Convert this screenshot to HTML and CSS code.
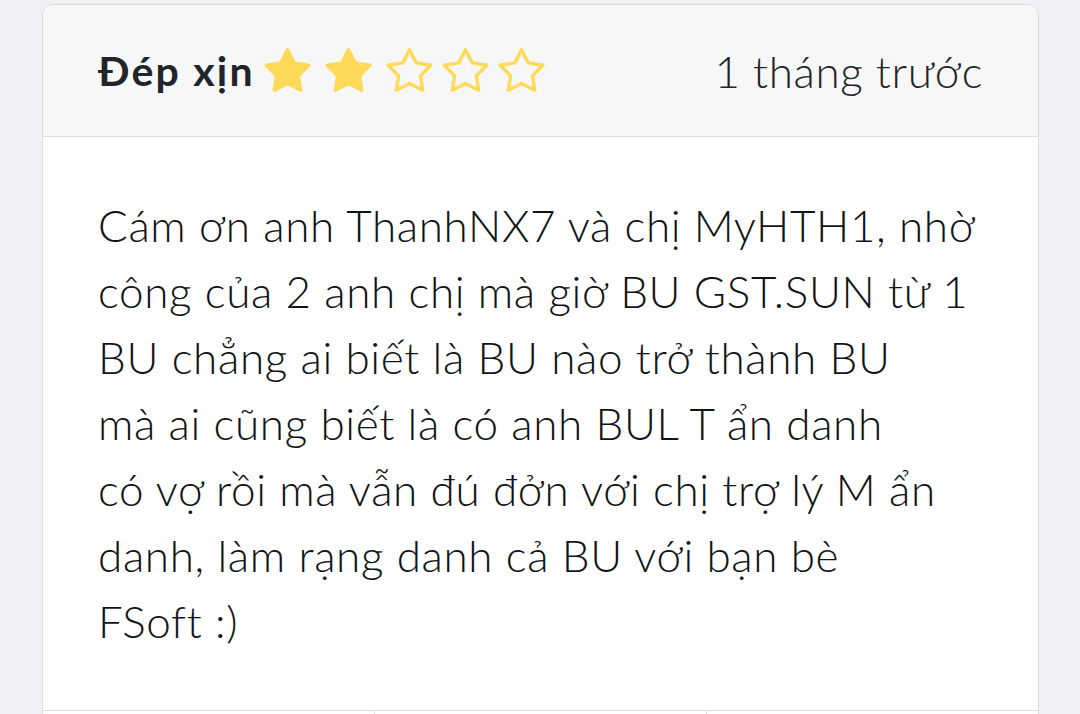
FILE: index.html
```html
<!DOCTYPE html>
<html lang="vi">
<head>
    <meta charset="UTF-8">
    <meta name="viewport" content="width=device-width, initial-scale=1.0">
    <title>Đánh giá</title>
    <link rel="stylesheet" href="styles.css">
</head>
<body>
    <div class="page">
        <div class="card">
            <div class="card-header">
                <div class="title-wrap">
                    <h5 class="title">Đép xịn</h5>
                    <div class="stars">
                        <svg class="star filled" viewBox="0 0 24 24"><polygon points="12 1.8 15.29 8.27 22.46 9.4 17.33 14.53 18.47 21.7 12 18.4 5.53 21.7 6.67 14.53 1.54 9.4 8.71 8.27"/></svg>
                        <svg class="star filled" viewBox="0 0 24 24"><polygon points="12 1.8 15.29 8.27 22.46 9.4 17.33 14.53 18.47 21.7 12 18.4 5.53 21.7 6.67 14.53 1.54 9.4 8.71 8.27"/></svg>
                        <svg class="star" viewBox="0 0 24 24"><polygon points="12 1.8 15.29 8.27 22.46 9.4 17.33 14.53 18.47 21.7 12 18.4 5.53 21.7 6.67 14.53 1.54 9.4 8.71 8.27"/></svg>
                        <svg class="star" viewBox="0 0 24 24"><polygon points="12 1.8 15.29 8.27 22.46 9.4 17.33 14.53 18.47 21.7 12 18.4 5.53 21.7 6.67 14.53 1.54 9.4 8.71 8.27"/></svg>
                        <svg class="star" viewBox="0 0 24 24"><polygon points="12 1.8 15.29 8.27 22.46 9.4 17.33 14.53 18.47 21.7 12 18.4 5.53 21.7 6.67 14.53 1.54 9.4 8.71 8.27"/></svg>
                    </div>
                </div>
                <span class="time">1 tháng trước</span>
            </div>
            <div class="card-body">
                <p class="review">Cám ơn anh ThanhNX7 và chị MyHTH1, nhờ<br>công của 2 anh chị mà giờ BU GST.SUN từ 1<br>BU chẳng ai biết là BU nào trở thành BU<br>mà ai cũng biết là có anh BUL T ẩn danh<br>có vợ rồi mà vẫn đú đởn với chị trợ lý M ẩn<br>danh, làm rạng danh cả BU với bạn bè<br>FSoft :)</p>
            </div>
            <div class="card-footer">
                <div class="footer-cell"></div>
                <div class="footer-cell"></div>
                <div class="footer-cell"></div>
            </div>
        </div>
    </div>
</body>
</html>
```

FILE: styles.css
```css
body {
    margin: 0;
    padding: 0;
    background: #f0f1f5;
    color: #212529;
    font-family: Lato, "Open Sans", sans-serif;
}
.page {
    padding: 4px 41px 0 42px;
}
.card {
    background: #fff;
    border: 1px solid #dcdcdc;
    border-radius: 11px;
    overflow: hidden;
}
.card-header {
    display: flex;
    justify-content: space-between;
    align-items: center;
    height: 131px;
    padding: 0 55px 0 55px;
    background: #f7f7f7;
    border-bottom: 1px solid #dcdcdc;
}
.title-wrap {
    display: flex;
    align-items: center;
}
.title {
    margin: 0 8px 0 0;
    font-size: 41px;
    font-weight: 700;
    letter-spacing: 2.2px;
}
.stars {
    display: flex;
    gap: 7px;
}
.star {
    width: 49px;
    height: 49px;
    fill: none;
    stroke: #ffd95a;
    stroke-width: 1.7;
    stroke-linejoin: round;
}
.star.filled {
    fill: #ffd95a;
    margin-right: 5px;
}
.time {
    font-size: 44px;
    font-weight: 300;
    letter-spacing: 0.6px;
}
.card-body {
    padding: 55px 55px 56px 55px;
}
.review {
    margin: 0;
    font-size: 44px;
    font-weight: 300;
    color: #111416;
    line-height: 66px;
    letter-spacing: 0.65px;
    white-space: nowrap;
}
.card-footer {
    display: flex;
    height: 40px;
    border-top: 1px solid #dcdcdc;
}
.footer-cell {
    flex: 1;
}
.footer-cell + .footer-cell {
    border-left: 1px solid #dcdcdc;
}
```
